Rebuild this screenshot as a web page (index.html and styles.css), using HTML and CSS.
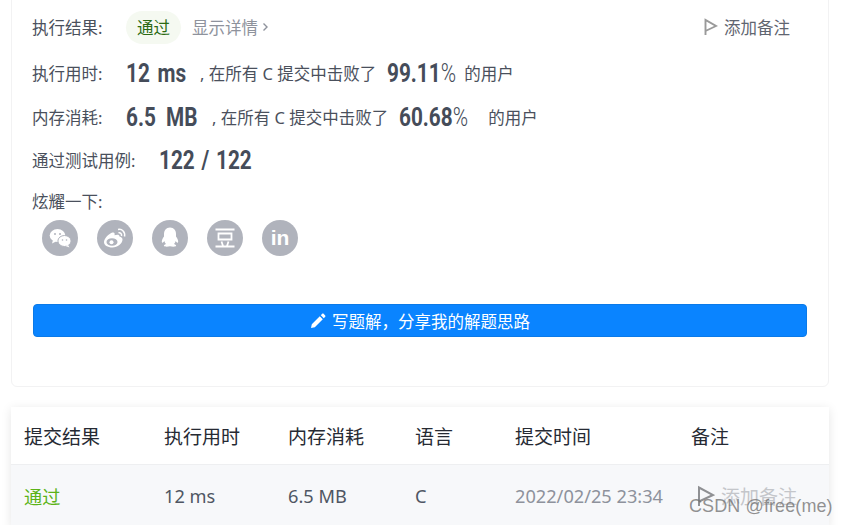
FILE: index.html
```html
<!DOCTYPE html>
<html lang="zh-CN">
<head>
    <meta charset="UTF-8">
    <meta name="viewport" content="width=device-width, initial-scale=1.0">
    <title>提交结果</title>
    <link rel="stylesheet" href="styles.css">
</head>
<body>
    <div class="result-card">
        <div class="row row-status">
            <span class="label label-status">执行结果:</span>
            <span class="status-pill">通过</span>
            <a class="details">显示详情
                <svg class="chevron" width="7" height="10" viewBox="0 0 7 10"><path d="M1.5 1.5 5 5 1.5 8.500" fill="none" stroke="#8e929c" stroke-width="1.400"/></svg>
            </a>
            <a class="add-note">
                <svg width="14" height="18" viewBox="0 0 14 18"><path d="M1.500 17V2L12 8 1.500 13" fill="none" stroke="#9a9a9a" stroke-width="1.900"/></svg>
                添加备注
            </a>
        </div>
        <div class="row row-time">
            <span class="label label-stat">执行用时:</span>
            <span class="big w-time">12 ms</span>
            <span class="text text-beat">, 在所有 C 提交中击败了</span>
            <span class="big big-pct w-pct1">99.11<i>%</i></span>
            <span class="text text-users">的用户</span>
        </div>
        <div class="row row-mem">
            <span class="label label-stat">内存消耗:</span>
            <span class="big w-mem">6.5 MB</span>
            <span class="text text-beat">, 在所有 C 提交中击败了</span>
            <span class="big big-pct w-pct2">60.68<i>%</i></span>
            <span class="text text-users">的用户</span>
        </div>
        <div class="row row-cases">
            <span class="label label-cases">通过测试用例:</span>
            <span class="big w-cases">122 / 122</span>
        </div>
        <div class="share-title">炫耀一下:</div>
        <div class="share-icons">
            <span class="share-icon">
                <svg width="36" height="36" viewBox="0 0 36 36">
                    <ellipse cx="15.500" cy="15.500" rx="7.800" ry="6.500" fill="#fff"/>
                    <path d="M11 20l-1 3.500 4-2z" fill="#fff"/>
                    <ellipse cx="22.500" cy="21" rx="6.600" ry="5.500" fill="#fff" stroke="#b0b3bc" stroke-width="1"/>
                    <path d="M26 25l1.500 2.500-4-1.500z" fill="#fff"/>
                    <circle cx="13" cy="14" r="1" fill="#b0b3bc"/>
                    <circle cx="18" cy="14" r="1" fill="#b0b3bc"/>
                    <circle cx="20.500" cy="20" r=".8" fill="#b0b3bc"/>
                    <circle cx="24.500" cy="20" r=".8" fill="#b0b3bc"/>
                </svg>
            </span>
            <span class="share-icon">
                <svg width="36" height="36" viewBox="0 0 36 36">
                    <path d="M15.500 27.500c-5 0-8.500-2.300-8.500-5.500 0-3.500 5-8.500 8.500-9.500 2-.5 2.500 1 2 2.800 2.500-1 5-1 5 1.200 2 .6 3 1.700 3 3 0 4-5 8-10 8z" fill="#fff"/>
                    <ellipse cx="15" cy="22" rx="5.500" ry="3.800" fill="#b0b3bc"/>
                    <circle cx="14.500" cy="22.200" r="2" fill="#fff"/>
                    <path d="M21 9.500c4-1 7.500 2.500 6.500 7M21.500 12.800c2-.5 3.500 1.200 3 3.200" fill="none" stroke="#fff" stroke-width="1.500"/>
                </svg>
            </span>
            <span class="share-icon">
                <svg width="36" height="36" viewBox="0 0 36 36">
                    <path d="M18 7.500c-4 0-6 3-6 6.500v2.500c-1.500 2-2.700 4.500-2 6 .5.700 1.500-.3 2.300-1.500.3 1.300 1 2.300 1.700 3-1.500.5-2.500 1.200-2 2 .5.800 3.500.8 6 .3 2.500.5 5.500.5 6-.3.500-.8-.5-1.500-2-2 .7-.7 1.400-1.700 1.700-3 .8 1.200 1.800 2.200 2.300 1.500.7-1.500-.5-4-2-6V14c0-3.500-2-6.500-6-6.500z" fill="#fff"/>
                </svg>
            </span>
            <span class="share-icon">
                <svg width="36" height="36" viewBox="0 0 36 36">
                    <path d="M8.500 9.500h19M11.500 13.500h13v6h-13zM14.500 21.500l1.500 4.500M21.500 21.500L20 26M8.500 26.500h19" fill="none" stroke="#fff" stroke-width="1.800"/>
                </svg>
            </span>
            <span class="share-icon share-in">in</span>
        </div>
        <button class="write-btn">
            <svg width="16" height="16" viewBox="0 0 16 16"><path d="M1 15l.8-3.800 8-8 3 3-8 8zM10.800 2.200l1.400-1.400c.4-.4 1-.4 1.400 0l1.600 1.600c.4.400.4 1 0 1.400l-1.400 1.400z" fill="#fff"/></svg>
            写题解，分享我的解题思路
        </button>
    </div>

    <div class="submissions">
        <div class="sub-row sub-head">
            <span>提交结果</span>
            <span>执行用时</span>
            <span>内存消耗</span>
            <span>语言</span>
            <span>提交时间</span>
            <span>备注</span>
        </div>
        <div class="sub-row sub-body">
            <span class="passed">通过</span>
            <span>12 ms</span>
            <span>6.5 MB</span>
            <span>C</span>
            <span class="sub-time">2022/02/25 23:34</span>
            <span class="sub-note">
                <svg width="18" height="22" viewBox="0 0 18 22"><path d="M2 21V2.500L16 10 2 16.500" fill="none" stroke="#8f9093" stroke-width="2"/></svg>
                添加备注
            </span>
        </div>
    </div>

    <div class="watermark">CSDN @free(me)</div>
</body>
</html>
```

FILE: styles.css
```css
html, body {
    height: 525px;
    overflow: hidden;
}
body {
    position: relative;
    margin: 0;
    padding: 0 18px 0 11px;
    background-color: #ffffff;
    color: #4a505c;
    font-family: "Noto Sans", "Noto Sans CJK SC", sans-serif;
    font-size: 16.500px;
}
.result-card {
    margin-top: -10px;
    height: 397px;
    box-sizing: border-box;
    padding: 10px 21px 0;
    border: 1px solid #f2f2f3;
    border-radius: 6px;
}
.row {
    display: flex;
    align-items: center;
    height: 36px;
    margin-left: -1px;
}
.row-status {
    margin-top: 8px;
}
.row-time {
    margin-top: 10px;
}
.row-mem {
    margin-top: 8px;
}
.row-cases {
    margin-top: 7px;
}
.label {
    color: #4a505c;
    white-space: nowrap;
}
.label-status {
    width: 94px;
}
.label-stat {
    width: 94px;
}
.label-cases {
    width: 127px;
}
.status-pill {
    width: 55px;
    height: 33px;
    line-height: 33px;
    text-align: center;
    border-radius: 17px;
    background-color: #f5f9f1;
    color: #2b6b14;
}
.details {
    margin-left: 11px;
    color: #8e929c;
    display: flex;
    align-items: center;
    gap: 4px;
}
.add-note {
    margin-left: auto;
    margin-right: 17px;
    display: flex;
    align-items: center;
    gap: 6px;
    color: #5f6570;
}
/* the reference numbers are a narrow DIN style face, nothing like it is installed */
.big {
    flex: none;
    font-family: "Roboto", sans-serif;
    font-weight: 700;
    font-size: 25px;
    color: #454c59;
    word-spacing: 3px;
    white-space: nowrap;
    transform: scaleX(.83);
    transform-origin: left center;
}
.big i {
    font-style: normal;
    font-weight: 300;
}
.w-time {
    width: 63px;
}
.w-mem {
    width: 75px;
    word-spacing: 6px;
}
.w-pct1 {
    width: 64px;
}
.w-pct2 {
    width: 76px;
}
.w-cases {
    width: 94px;
    word-spacing: 2px;
}
.text {
    white-space: nowrap;
}
.text-beat {
    margin-left: 11px;
}
.big-pct {
    margin-left: 11px;
}
.text-users {
    margin-left: 13px;
}
.share-title {
    margin: 12px 0 0 -1px;
    line-height: 24px;
}
.share-icons {
    display: flex;
    gap: 19px;
    margin: 6px 0 0 9px;
}
.share-icon {
    width: 36px;
    height: 36px;
    border-radius: 50%;
    background-color: #b0b3bc;
    display: flex;
    align-items: center;
    justify-content: center;
}
.share-in {
    color: #ffffff;
    font-family: "Liberation Sans", sans-serif;
    font-weight: 700;
    font-size: 21px;
}
.write-btn {
    display: flex;
    align-items: center;
    justify-content: center;
    gap: 6px;
    width: 100%;
    height: 33px;
    margin-top: 48px;
    border: 1px solid #0b7ae8;
    border-radius: 4px;
    background-color: #0a84ff;
    color: #ffffff;
    font: inherit;
}
.submissions {
    margin-top: 20px;
    background: #ffffff;
    box-shadow: 0 2px 10px rgba(0, 0, 0, 0.1);
}
.sub-row {
    display: grid;
    grid-template-columns: 140px 124px 127px 100px 176px 1fr;
    padding-left: 13px;
    align-items: center;
}
.sub-head {
    height: 58px;
    padding-top: 1px;
    box-sizing: border-box;
    border-bottom: 1px solid #eeeff1;
    color: #262a33;
    font-size: 19px;
}
.sub-body {
    height: 62px;
    background-color: #f7f8fa;
    font-size: 18.200px;
    color: #4f5663;
}
.passed {
    color: #5cb318;
}
.sub-time {
    color: #8e929c;
}
.sub-note {
    display: flex;
    align-items: center;
    gap: 6px;
    margin-left: 6px;
    font-size: 19px;
    color: #c4c6ca;
}
.watermark {
    position: absolute;
    left: 689px;
    top: 496px;
    font-family: "Liberation Sans", sans-serif;
    font-size: 18px;
    letter-spacing: .1px;
    color: rgba(110, 110, 110, 0.75);
    white-space: nowrap;
}
```
